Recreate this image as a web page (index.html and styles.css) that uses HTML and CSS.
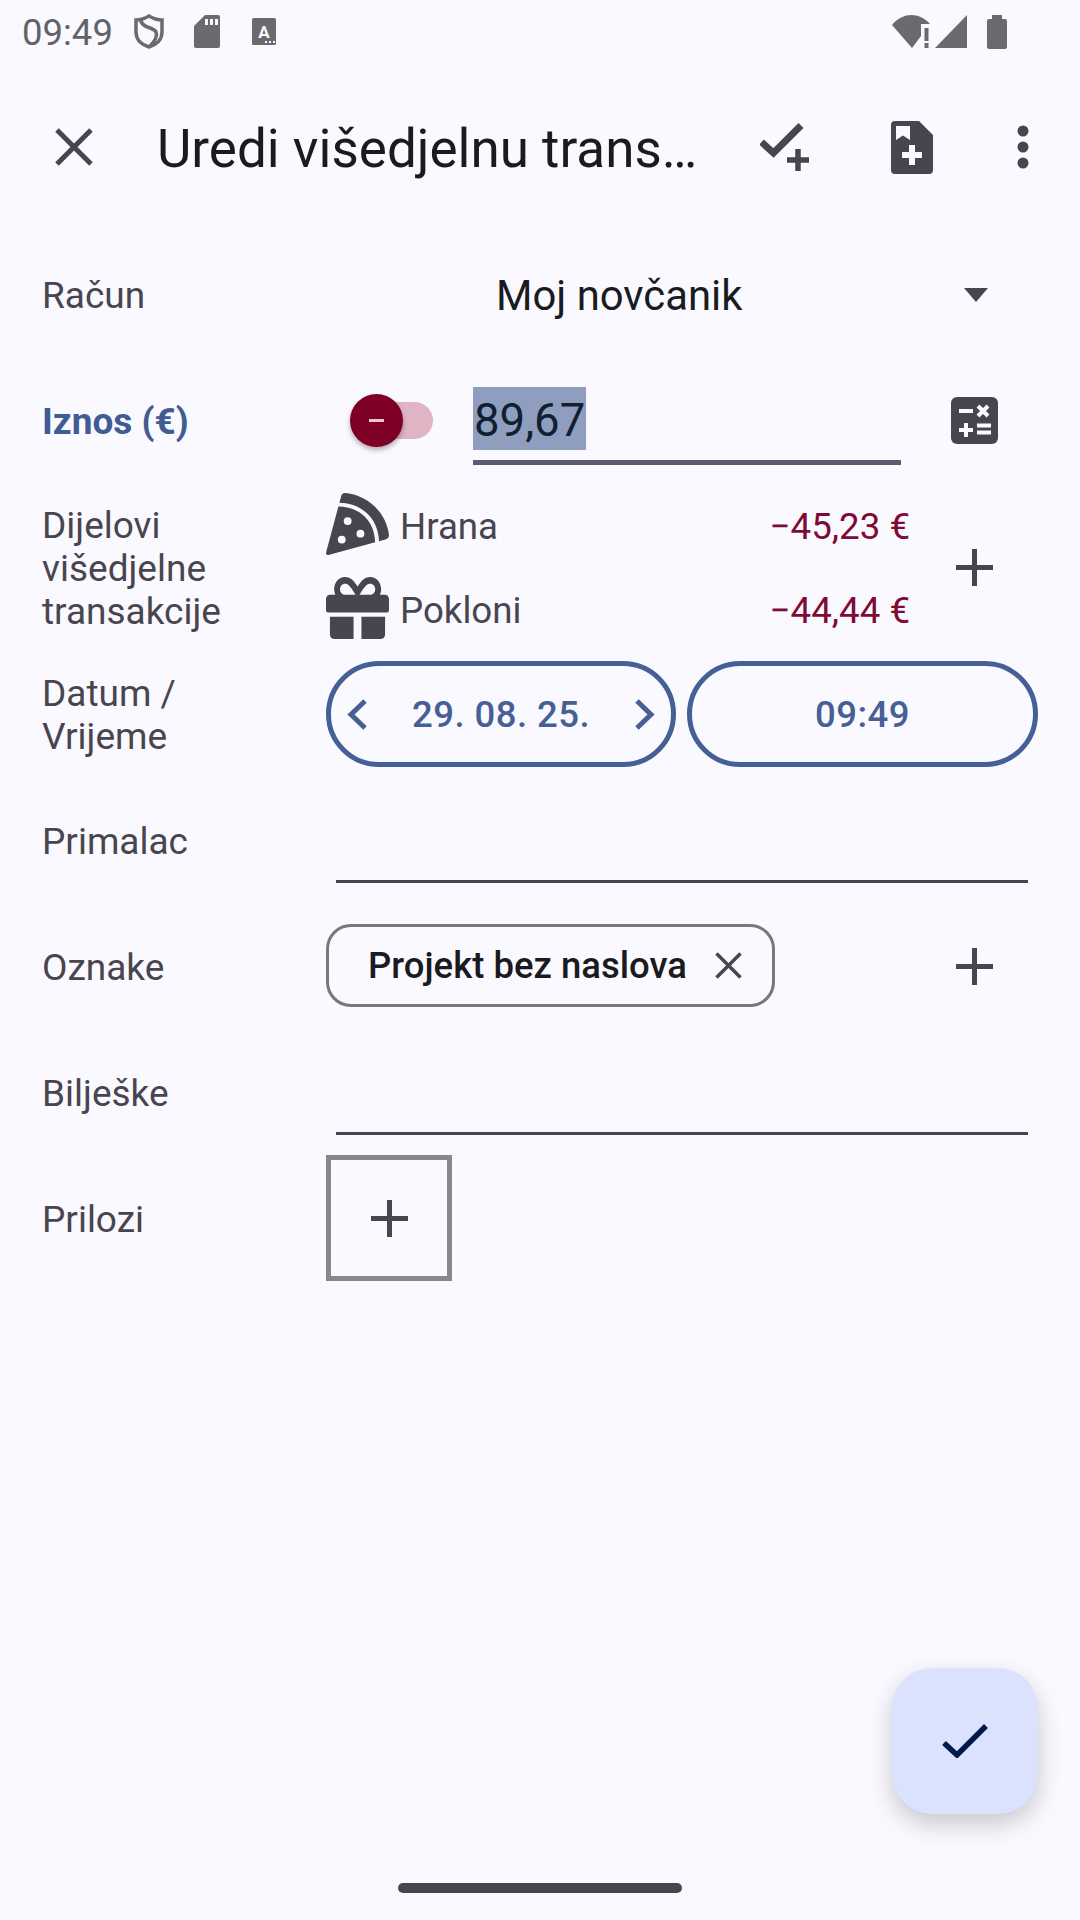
FILE: index.html
```html
<!DOCTYPE html>
<html lang="hr">
<head>
    <meta charset="UTF-8">
    <meta name="viewport" content="width=device-width, initial-scale=1.0">
    <title>Uredi višedjelnu transakciju</title>
    <link rel="stylesheet" href="styles.css">
</head>
<body>
    <div class="screen">
        <div class="status-bar">
            <span class="status-time">09:49</span>
            <svg class="ic-shield" width="30" height="35" viewBox="0 0 30 35" fill="none" stroke="#6b6b6f" stroke-width="3.5">
                <path d="M15 2C20 5 24 6 28 6V18C28 26 22 31 15 33C8 31 2 26 2 18V6C6 6 10 5 15 2Z"/>
                <path d="M7 6C7 14 20 13 22 18C24 23 20 28 16 32"/>
            </svg>
            <svg class="ic-sd" width="26" height="33" viewBox="0 0 26 33">
                <path d="M11 0H24A2 2 0 0 1 26 2V31A2 2 0 0 1 24 33H2A2 2 0 0 1 0 31V11Z" fill="#6b6b6f"/>
                <path d="M11 4H14V10H11ZM16 4H19V10H16ZM21 4H24V10H21Z" fill="#f9f9ff"/>
            </svg>
            <svg class="ic-a" width="24" height="27" viewBox="0 0 24 27">
                <rect width="24" height="27" rx="1.5" fill="#6b6b6f"/>
                <text x="12" y="19.5" class="ic-a-letter">A</text>
                <path d="M13 23H15V25H13ZM17 23H19V25H17ZM21 23H23V25H21Z" fill="#f9f9ff"/>
            </svg>
            <div class="status-right">
                <svg class="ic-wifi" width="38" height="34" viewBox="0 0 38 34">
                    <path d="M0 10C11 -3 27 -3 38 9H29V21L20 33Z" fill="#6b6b6f"/>
                    <path d="M32.500 13H36.500V26H32.500ZM32.500 28H36.500V33H32.500Z" fill="#6b6b6f"/>
                </svg>
                <svg class="ic-signal" width="32" height="33" viewBox="0 0 32 33">
                    <path d="M0 33L32 0V33Z" fill="#6b6b6f"/>
                </svg>
                <svg class="ic-battery" width="20" height="34" viewBox="0 0 20 34">
                    <path d="M5 0H15V4H18A2 2 0 0 1 20 6V32A2 2 0 0 1 18 34H2A2 2 0 0 1 0 32V6A2 2 0 0 1 2 4H5Z" fill="#6b6b6f"/>
                </svg>
            </div>
        </div>

        <div class="toolbar">
            <svg class="tool-icon" width="50" height="50" viewBox="0 0 50 50" fill="none" stroke="#49454f" stroke-width="5">
                <path d="M8 8L42 42M42 8L8 42"/>
            </svg>
            <h1 class="toolbar-title">Uredi višedjelnu trans…</h1>
            <svg class="tool-icon" width="50" height="50" viewBox="0 0 50 50" fill="none" stroke="#49454f">
                <path d="M1.500 20L13.500 31L41 3.500" stroke-width="7"/>
                <path d="M38 27V49M27 38H49" stroke-width="5.500"/>
            </svg>
            <svg class="tool-icon tool-file" width="42" height="53" viewBox="0 0 42 53">
                <path d="M4 0H28L42 14V49A4 4 0 0 1 38 53H4A4 4 0 0 1 0 49V4A4 4 0 0 1 4 0Z" fill="#49454f"/>
                <path d="M5 5H19V19L12 14.500L5 19Z" fill="#f9f9ff"/>
                <path d="M18 24H24V31H31V37H24V44H18V37H11V31H18Z" fill="#f9f9ff"/>
            </svg>
            <svg class="tool-icon tool-more" width="12" height="44" viewBox="0 0 12 44" fill="#49454f">
                <circle cx="6" cy="6" r="5.500"/>
                <circle cx="6" cy="22" r="5.500"/>
                <circle cx="6" cy="38" r="5.500"/>
            </svg>
        </div>

        <div class="form">
            <div class="row">
                <div class="label">Račun</div>
                <div class="value account">
                    <span class="account-name">Moj novčanik</span>
                    <span class="caret"></span>
                </div>
            </div>

            <div class="row">
                <div class="label label-active">Iznos (€)</div>
                <div class="value">
                    <div class="toggle">
                        <span class="toggle-thumb"><span class="toggle-minus"></span></span>
                        <span class="toggle-track"></span>
                    </div>
                    <div class="amount-field"><span class="amount-selected">89,67</span></div>
                    <svg class="calc-icon" width="47" height="47" viewBox="0 0 47 47">
                        <rect width="47" height="47" rx="6" fill="#47464f"/>
                        <path d="M8 14H22M27 9L37 19M37 9L27 19M8 33H22M15 26V40M26 28.500H40M26 35.500H40" stroke="#f9f9ff" stroke-width="4" fill="none"/>
                    </svg>
                </div>
            </div>

            <div class="row row-splits">
                <div class="label">Dijelovi višedjelne transakcije</div>
                <div class="value">
                    <div class="splits">
                        <div class="split">
                            <svg class="split-icon" width="63" height="62" viewBox="0 0 512 512" preserveAspectRatio="none" fill="#47464f">
                                <path d="M158.87.15c-16.16-1.52-31.2 8.42-35.33 24.12l-14.81 56.27c187.62 5.49 314.54 130.61 322.48 317l56.94-15.78c15.72-4.36 25.49-19.68 23.62-35.9C490.89 165.08 340.78 17.32 158.87.15zm-58.47 112L.55 491.64a16.21 16.21 0 0 0 20 19.75l379-105.1c-4.27-174.89-123.08-292.14-299.15-294.1zM128 416a32 32 0 1 1 32-32 32 32 0 0 1-32 32zm48-152a32 32 0 1 1 32-32 32 32 0 0 1-32 32zm104 104a32 32 0 1 1 32-32 32 32 0 0 1-32 32z"/>
                            </svg>
                            <span class="split-name">Hrana</span>
                            <span class="split-amount">−45,23 €</span>
                        </div>
                        <div class="split">
                            <svg class="split-icon" width="63" height="62" viewBox="0 32 512 448" preserveAspectRatio="none" fill="#47464f">
                                <path d="M32 448c0 17.700 14.300 32 32 32h160V320H32v128zm256 32h160c17.700 0 32-14.300 32-32V320H288v160zm192-320h-42.100c6.200-12.100 10.100-25.500 10.100-40 0-48.500-39.500-88-88-88-41.600 0-68.500 21.300-103 68.300-34.500-47-61.400-68.300-103-68.300-48.500 0-88 39.500-88 88 0 14.500 3.800 27.900 10.100 40H32c-17.700 0-32 14.300-32 32v80c0 8.800 7.200 16 16 16h480c8.800 0 16-7.200 16-16v-80c0-17.700-14.300-32-32-32zm-326.100 0c-22.100 0-40-17.900-40-40s17.900-40 40-40c19.900 0 34.600 3.300 86.100 80h-86.100zm206.100 0h-87.100c51.400-76.500 65.700-80 87.100-80 22.100 0 40 17.900 40 40s-17.900 40-40 40z"/>
                            </svg>
                            <span class="split-name">Pokloni</span>
                            <span class="split-amount">−44,44 €</span>
                        </div>
                    </div>
                    <svg class="plus-icon" width="37" height="37" viewBox="0 0 37 37">
                        <path d="M18.500 0V37M0 18.500H37" stroke="#49454f" stroke-width="5" fill="none"/>
                    </svg>
                </div>
            </div>

            <div class="row">
                <div class="label">Datum / Vrijeme</div>
                <div class="value pills">
                    <div class="pill pill-date">
                        <svg width="20" height="31" viewBox="0 0 20 31" fill="none" stroke="#465f95" stroke-width="5">
                            <path d="M18 2L4 15.500L18 29"/>
                        </svg>
                        <span>29. 08. 25.</span>
                        <svg width="20" height="31" viewBox="0 0 20 31" fill="none" stroke="#465f95" stroke-width="5">
                            <path d="M2 2L16 15.500L2 29"/>
                        </svg>
                    </div>
                    <div class="pill pill-time"><span>09:49</span></div>
                </div>
            </div>

            <div class="row">
                <div class="label">Primalac</div>
                <div class="value"><div class="line-field"></div></div>
            </div>

            <div class="row">
                <div class="label">Oznake</div>
                <div class="value">
                    <div class="chip">
                        <span class="chip-text">Projekt bez naslova</span>
                        <svg width="27" height="27" viewBox="0 0 27 27" fill="none" stroke="#49454f" stroke-width="3.500">
                            <path d="M1.500 1.500L25.500 25.500M25.500 1.500L1.500 25.500"/>
                        </svg>
                    </div>
                    <svg class="plus-icon plus-tags" width="37" height="37" viewBox="0 0 37 37">
                        <path d="M18.500 0V37M0 18.500H37" stroke="#49454f" stroke-width="5" fill="none"/>
                    </svg>
                </div>
            </div>

            <div class="row">
                <div class="label">Bilješke</div>
                <div class="value"><div class="line-field"></div></div>
            </div>

            <div class="row">
                <div class="label">Prilozi</div>
                <div class="value">
                    <div class="attach">
                        <svg width="37" height="37" viewBox="0 0 37 37">
                            <path d="M18.500 0V37M0 18.500H37" stroke="#49454f" stroke-width="5" fill="none"/>
                        </svg>
                    </div>
                </div>
            </div>
        </div>

        <div class="nav-bar"><span class="nav-handle"></span></div>

        <div class="fab">
            <svg width="46" height="34" viewBox="0 0 46 34" fill="none" stroke="#00194d" stroke-width="5.500">
                <path d="M2 19L15 31L44 2"/>
            </svg>
        </div>
    </div>
</body>
</html>
```

FILE: styles.css
```css
* {
    box-sizing: border-box;
}
body {
    font-family: Roboto, "Liberation Sans", sans-serif;
    background-color: #f9f9ff;
    color: #49454f;
    margin: 0;
    padding: 0;
}
.screen {
    position: relative;
    width: 1080px;
    height: 1920px;
    display: flex;
    flex-direction: column;
    overflow: hidden;
}

/* status bar */
.status-bar {
    height: 63px;
    padding-left: 22px;
    display: flex;
    align-items: center;
    flex-shrink: 0;
}
.status-time {
    font-size: 36.500px;
    color: #636367;
    margin-top: 2px;
}
.ic-shield {
    margin-left: 21px;
}
.ic-sd {
    margin-left: 30px;
}
.ic-a {
    margin-left: 32px;
}
.ic-a-letter {
    font-family: Roboto, sans-serif;
    font-size: 17px;
    font-weight: 700;
    fill: #f9f9ff;
    text-anchor: middle;
}
.status-right {
    margin-left: auto;
    padding-right: 73px;
    display: flex;
    align-items: center;
}
.ic-signal {
    margin-left: 5px;
}
.ic-battery {
    margin-left: 20px;
}

/* toolbar */
.toolbar {
    height: 168px;
    padding-left: 49px;
    padding-right: 51px;
    display: flex;
    align-items: center;
    flex-shrink: 0;
}
.toolbar-title {
    flex: 1;
    margin: 3px 0 0 58px;
    font-size: 53px;
    font-weight: 400;
    color: #1a1b20;
    white-space: nowrap;
}
.tool-file {
    margin-left: 81px;
}
.tool-more {
    margin-left: 84px;
}

/* form rows */
.form {
    padding: 1px 42px 0 42px;
    display: flex;
    flex-direction: column;
}
.row {
    height: 126px;
    display: flex;
    align-items: center;
}
.row-splits {
    height: 168px;
}
.label {
    width: 284px;
    padding-right: 60px;
    flex-shrink: 0;
    font-size: 37px;
    line-height: 43px;
}
.label-active {
    color: #3f5c94;
    font-weight: 700;
}
.value {
    flex: 1;
    height: 100%;
    display: flex;
    align-items: center;
}

.account-name {
    margin-left: 170px;
    font-size: 41.800px;
    color: #1a1b20;
}
.caret {
    margin-left: auto;
    margin-right: 50px;
    width: 0;
    height: 0;
    border-left: 12.500px solid transparent;
    border-right: 12.500px solid transparent;
    border-top: 14px solid #49454f;
}

/* amount */
.toggle {
    margin-left: 24px;
    margin-bottom: 2px;
    display: flex;
    align-items: center;
}
.toggle-thumb {
    width: 53px;
    height: 53px;
    border-radius: 50%;
    background-color: #7f0027;
    box-shadow: 0 3px 5px rgba(0, 0, 0, 0.3);
    display: flex;
    align-items: center;
    justify-content: center;
    position: relative;
    z-index: 1;
}
.toggle-minus {
    width: 15px;
    height: 3px;
    background-color: #eec4d0;
}
.toggle-track {
    width: 60px;
    height: 37px;
    margin-left: -30px;
    border-radius: 19px;
    background-color: #e0b4c4;
}
.amount-field {
    width: 428px;
    height: 78px;
    margin-left: 40px;
    margin-top: 10px;
    border-bottom: 5px solid #5c5b70;
}
.amount-selected {
    display: inline-block;
    height: 63px;
    padding: 4px 1px 0;
    background-color: #8f9dbf;
    color: #10202f;
    font-size: 45.500px;
    line-height: 59px;
}
.calc-icon {
    margin-left: 50px;
    margin-bottom: 2px;
}

/* split rows */
.splits {
    width: 584px;
    display: flex;
    flex-direction: column;
}
.split {
    height: 84px;
    display: flex;
    align-items: center;
}
.split-icon {
    margin-bottom: 4px;
}
.split-name {
    margin-left: 11px;
    font-size: 36.700px;
}
.split-amount {
    margin-left: auto;
    font-size: 36.700px;
    color: #7f0a33;
}
.plus-icon {
    margin-left: 46px;
    margin-bottom: 2px;
}

/* date and time */
.pills {
    gap: 11px;
    padding-bottom: 2px;
}
.pill {
    width: 350px;
    height: 106px;
    border: 5px solid #465f95;
    border-radius: 53px;
    color: #465f95;
    font-size: 36.500px;
    font-weight: 500;
    letter-spacing: 0.45px;
    display: flex;
    align-items: center;
    justify-content: center;
}
.pill-date {
    padding: 0 16px;
    justify-content: space-between;
}
.pill-time {
    width: 351px;
}

.line-field {
    width: 692px;
    height: 3px;
    margin-left: 10px;
    align-self: flex-end;
    margin-bottom: 21px;
    background-color: #49454f;
}

/* tag chip */
.chip {
    width: 449px;
    height: 83px;
    margin-bottom: 4px;
    padding: 0 30px 0 39px;
    border: 3px solid #79767d;
    border-radius: 25px;
    display: flex;
    align-items: center;
    justify-content: space-between;
}
.chip-text {
    font-size: 36.500px;
    font-weight: 500;
    color: #1a1b20;
}
.plus-tags {
    margin-left: 181px;
}

.attach {
    width: 126px;
    height: 126px;
    margin-bottom: 2px;
    border: 5px solid #88888c;
    display: flex;
    align-items: center;
    justify-content: center;
}

/* bottom */
.nav-bar {
    margin-top: auto;
    height: 37px;
    padding-bottom: 27px;
    display: flex;
    justify-content: center;
    align-items: flex-end;
}
.nav-handle {
    width: 284px;
    height: 10px;
    border-radius: 5px;
    background-color: #49454f;
}
.fab {
    position: absolute;
    left: 892px;
    top: 1668px;
    width: 146px;
    height: 146px;
    border-radius: 40px;
    background-color: #dae2fd;
    box-shadow: 0 10px 24px rgba(0, 0, 0, 0.2);
    display: flex;
    align-items: center;
    justify-content: center;
}
```
